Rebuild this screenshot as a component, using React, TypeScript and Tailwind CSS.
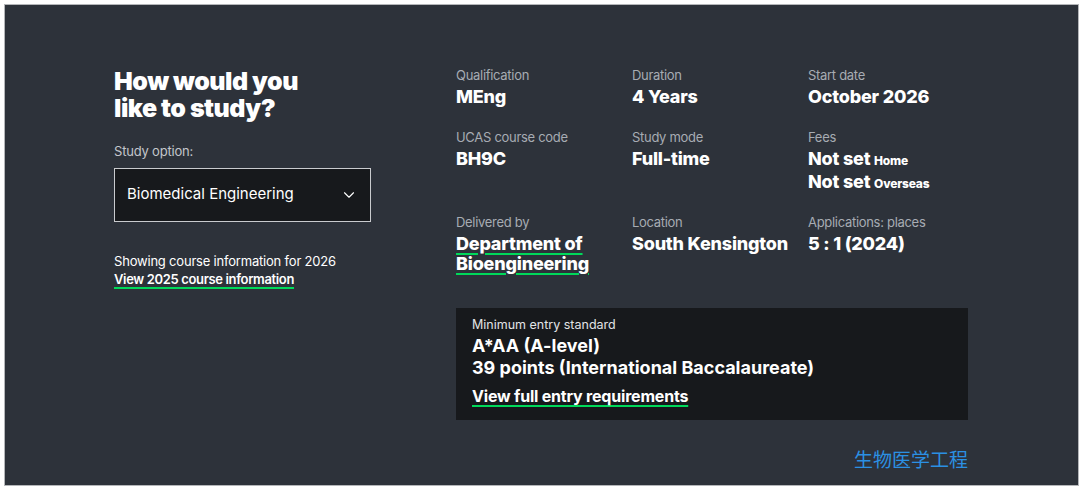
import { ChevronDown } from "lucide-react";

const linkClass =
  "underline decoration-[#00d95a] decoration-2 underline-offset-[3px]";

type Fact = {
  label: string;
  value: React.ReactNode;
};

const facts: Fact[] = [
  { label: "Qualification", value: "MEng" },
  { label: "Duration", value: "4 Years" },
  { label: "Start date", value: "October 2026" },
  { label: "UCAS course code", value: "BH9C" },
  { label: "Study mode", value: "Full-time" },
  {
    label: "Fees",
    value: (
      <div className="flex flex-col gap-[3px]">
        <span>
          Not set <span className="text-[12px] leading-none">Home</span>
        </span>
        <span>
          Not set <span className="text-[12px] leading-none">Overseas</span>
        </span>
      </div>
    ),
  },
  {
    label: "Delivered by",
    value: <span className={linkClass}>Department of Bioengineering</span>,
  },
  { label: "Location", value: "South Kensington" },
  { label: "Applications: places", value: "5 : 1 (2024)" },
];

function FactItem({ label, value }: Fact) {
  return (
    <div className="flex flex-col">
      <div className="text-[13px] leading-[18px] tracking-[-0.3px] text-[#a7acb3]">
        {label}
      </div>
      <div className="mt-[3px] text-[18px] font-extrabold leading-[20px] tracking-[-0.2px] text-white">
        {value}
      </div>
    </div>
  );
}

export default function App() {
  return (
    <div
      className="h-[486px] w-[1080px] bg-white pl-[4px] pt-[4px]"
      style={{ fontFamily: "Inter, 'Noto Sans CJK SC', sans-serif" }}
    >
      <div className="h-[482px] w-[1075px] border border-[#b4b6b9] bg-[#2d323a]">
        <div className="flex pl-[109px] pt-[61px]">
          {/* left column */}
          <div className="flex w-[342px] flex-col">
            <h2 className="mt-[2px] text-[25px] font-black leading-[27px] tracking-[-0.5px] text-white">
              How would you
              <br />
              like to study?
            </h2>
            <div className="mt-[20px] text-[13px] tracking-[-0.2px] text-[#c3c6cb]">
              Study option:
            </div>
            <div className="mt-[6px] flex h-[54px] w-[257px] items-center justify-between border border-[#c9cbce] bg-[#17191c] pl-[12px] pr-[12px]">
              <span className="text-[15px] text-white">Biomedical Engineering</span>
              <ChevronDown className="h-[18px] w-[18px] text-white" strokeWidth={1.5} />
            </div>
            <div className="mt-[30px] text-[13px] leading-[18px] tracking-[-0.2px] text-white">
              Showing course information for 2026
            </div>
            <div className="text-[13px] font-semibold leading-[18px] tracking-[-0.35px] text-white">
              <span className={linkClass}>View 2025 course information</span>
            </div>
          </div>

          {/* right column */}
          <div className="flex w-[512px] flex-col">
            <div className="grid grid-cols-[176px_176px_160px] gap-y-[21px]">
              {facts.map((f) => (
                <FactItem key={f.label} label={f.label} value={f.value} />
              ))}
            </div>
            <div className="mt-[34px] flex flex-col bg-[#17191c] px-[16px] pb-[14px] pt-[9px] text-white">
              <div className="text-[12.5px] leading-[16px] text-[#e2e4e6]">
                Minimum entry standard
              </div>
              <div className="mt-[2px] text-[18px] font-bold leading-[22px]">
                A*AA (A-level)
              </div>
              <div className="text-[18px] font-bold leading-[22px]">
                39 points (International Baccalaureate)
              </div>
              <div className="mt-[7px] text-[16px] font-bold leading-[20px] tracking-[-0.2px]">
                <span className={linkClass}>View full entry requirements</span>
              </div>
            </div>
            <div className="mt-[29px] text-right text-[19px] leading-[24px] text-[#2b90e3]">
              生物医学工程
            </div>
          </div>
        </div>
      </div>
    </div>
  );
}
